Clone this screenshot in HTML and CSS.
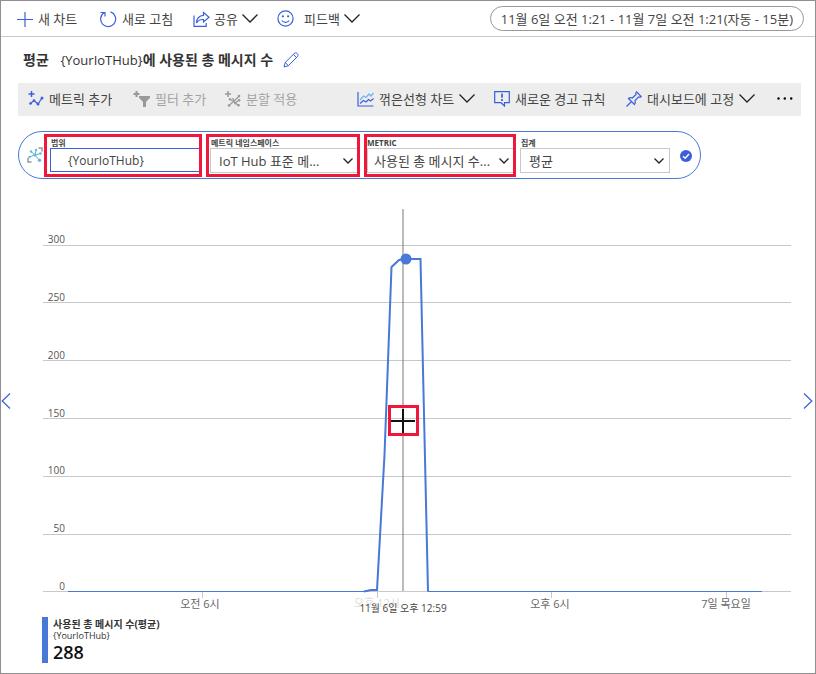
FILE: index.html
```html
<!DOCTYPE html>
<html lang="ko">
<head>
<meta charset="utf-8">
<meta name="viewport" content="width=device-width, initial-scale=1">
<title>메트릭</title>
<link rel="stylesheet" href="styles.css">
</head>
<body>
<main class="frame">
  <header class="topbar">
    <nav class="actions" aria-label="차트 작업">
      <button class="action" type="button">
        <svg class="icon" width="16" height="16" viewBox="0 0 16 16"><path d="M8 1v15M0 8.500h16"/></svg>
        새 차트
      </button>
      <button class="action" type="button">
        <svg class="icon" width="18" height="18" viewBox="0 0 18 18"><path d="M11.500 1.900A7.500 7.500 0 1 1 5.300 2.600M1.500 2.500h4.500v4"/></svg>
        새로 고침
      </button>
      <button class="action tight" type="button">
        <svg class="icon" width="17" height="16" viewBox="0 0 17 16"><path d="M1 4.500V15.300h12.200V12M10.500 1.500l5.500 4.700-5.500 4.800V8.500C7 8.300 5 9.500 3.500 12 3.800 7.500 6 4.500 10.500 4.300z"/></svg>
        공유
        <svg class="chevron" width="16" height="9" viewBox="0 0 16 9"><path d="M.5.500 8 8 15.500.500"/></svg>
      </button>
      <button class="action tight" type="button">
        <svg class="icon smile" width="17" height="17" viewBox="0 0 17 17"><circle cx="8.500" cy="8.500" r="7.600"/><path d="M4.800 10.500c1.700 2.500 5.700 2.500 7.400 0"/><circle class="dot" cx="5.900" cy="6.300" r="1.100"/><circle class="dot" cx="11.100" cy="6.300" r="1.100"/></svg>
        피드백
        <svg class="chevron" width="16" height="9" viewBox="0 0 16 9"><path d="M.5.500 8 8 15.500.500"/></svg>
      </button>
    </nav>
    <button class="range" type="button">11월 6일 오전 1:21 - 11월 7일 오전 1:21(자동 - 15분)</button>
  </header>

  <div class="heading">
    <h1 class="title">평균 <span class="resource">{YourIoTHub}</span>에 사용된 총 메시지 수</h1>
    <button class="edit" type="button" aria-label="제목 편집">
      <svg class="icon" width="16" height="16" viewBox="0 0 16 16"><path d="M1 15l1.200-4.500L11.500 1.200c2-1.200 4.300 1 3.200 3.100L5.400 13.700zM2.200 10.500l3.200 3.200M10.300 2.400l3.200 3.200"/></svg>
    </button>
  </div>

  <div class="toolbar" role="toolbar" aria-label="메트릭 도구">
    <button class="tool" type="button">
      <svg class="icon" width="16" height="16" viewBox="0 0 16 16"><path d="M3.500 0v6M.5 3h6" stroke-width="1.500"/><path d="M2.500 12.500 6 9.500l4 3.500 4-6"/><g class="dot"><circle cx="2.500" cy="12.500" r="1.300"/><circle cx="6" cy="9.500" r="1.300"/><circle cx="10" cy="13" r="1.500"/><circle cx="14" cy="7" r="1.500"/></g></svg>
      메트릭 추가
    </button>
    <button class="tool" type="button" disabled>
      <svg class="icon muted" width="17" height="16" viewBox="0 0 17 16"><path d="M3.500 0v6M.5 3h6" stroke-width="2"/><path class="dot" d="M6 5h11v1.800L13 11v5h-3v-5L6 6.800z"/></svg>
      필터 추가
    </button>
    <button class="tool" type="button" disabled>
      <svg class="icon muted" width="16" height="16" viewBox="0 0 16 16"><path d="M3 0v6M0 3h6" stroke-width="1.500"/><path d="M4 14.500 8.500 10.500 14 5.500M5.500 8.500l3 2 5 4M7.500 7l3 5 3.500-3"/><g class="dot"><circle cx="5" cy="8.300" r="1.200"/><circle cx="10.500" cy="12.300" r="1.200"/><circle cx="14" cy="5" r="1.300"/><circle cx="14.200" cy="9.300" r="1.200"/><circle cx="4" cy="14.500" r="1.300"/><circle cx="13.500" cy="14.300" r="1.300"/></g></svg>
      분할 적용
    </button>
    <button class="tool" type="button">
      <svg class="icon" width="17" height="16" viewBox="0 0 17 16"><path d="M1 1v14h15.500"/><path d="M3 12.500l3.500-3 2.500 1.500 2.500-2.500 2 1.500 3-2.500"/><path class="light" d="M3 9l3.500-4L9 6.500 12 3l2 2 2.500-3"/></svg>
      꺾은선형 차트
      <svg class="chevron" width="16" height="9" viewBox="0 0 16 9"><path d="M.5.500 8 8 15.500.500"/></svg>
    </button>
    <button class="tool" type="button">
      <svg class="icon" width="16" height="16" viewBox="0 0 16 16"><path d="M.7.700h14.600v11H10.500V15l-3.500-3.300H.7z"/><path d="M8 2.500v4.300M8 8v2" stroke-width="1.700"/></svg>
      새로운 경고 규칙
    </button>
    <button class="tool" type="button">
      <svg class="icon" width="16" height="16" viewBox="0 0 16 16"><path d="M.5 15.500l5-5M2.500 7.500l6 6c1-1.300 1-2.500.500-3.800L12.500 6c1.200.400 2 .200 2.700-.500L10.500.800C9.800 1.500 9.600 2.300 10 3.500L6.300 7C5 6.500 3.800 6.500 2.500 7.500z"/></svg>
      대시보드에 고정
      <svg class="chevron" width="16" height="9" viewBox="0 0 16 9"><path d="M.5.500 8 8 15.500.500"/></svg>
    </button>
    <button class="more" type="button" aria-label="더 보기">
      <svg width="16" height="3" viewBox="0 0 16 3"><circle cx="1.500" cy="1.500" r="1.200"/><circle cx="7.800" cy="1.500" r="1.200"/><circle cx="14.200" cy="1.500" r="1.200"/></svg>
    </button>
  </div>

  <form class="query">
    <svg class="scope-icon" width="16" height="16" viewBox="0 0 16 16"><path class="corner" d="M11.500 1H15v3.500M1 11v4h3.500"/><path class="spoke" d="M8 8 4 4.500M8 8l6-1.500M8 8l-5.500 2M8 8l4.500 5.500M8 8l1-5"/><g class="node"><circle cx="4" cy="4.500" r="1.200"/><circle cx="9" cy="3" r="1.200"/><circle cx="13.500" cy="6.500" r="1.300"/><circle cx="2.500" cy="10" r="1.200"/><circle cx="12.500" cy="13.300" r="1.700"/><circle cx="8" cy="8" r="1.600"/></g></svg>
    <div class="field marked scope">
      <label for="scope">범위</label>
      <input id="scope" type="text" value="{YourIoTHub}">
    </div>
    <div class="field marked">
      <label for="namespace">메트릭 네임스페이스</label>
      <div class="picker">
        <select id="namespace"><option>IoT Hub 표준 메...</option></select>
        <svg class="chevron" width="10" height="6" viewBox="0 0 10 6"><path d="M.5.500 5 5 9.500.500"/></svg>
      </div>
    </div>
    <div class="field marked metric">
      <label for="metric">METRIC</label>
      <div class="picker">
        <select id="metric"><option>사용된 총 메시지 수...</option></select>
        <svg class="chevron" width="10" height="6" viewBox="0 0 10 6"><path d="M.5.500 5 5 9.500.500"/></svg>
      </div>
    </div>
    <div class="field">
      <label for="aggregation">집계</label>
      <div class="picker">
        <select id="aggregation"><option>평균</option></select>
        <svg class="chevron" width="10" height="6" viewBox="0 0 10 6"><path d="M.5.500 5 5 9.500.500"/></svg>
      </div>
    </div>
    <svg class="check" width="12" height="12" viewBox="0 0 12 12"><circle cx="6" cy="6" r="6"/><path d="M3 6.200 5.200 8.300 9 4"/></svg>
  </form>

  <section class="chart" aria-label="사용된 총 메시지 수">
    <button class="pager" type="button" aria-label="이전">
      <svg class="icon" width="10" height="16" viewBox="0 0 10 16"><path d="M9 .500 1.200 8 9 15.500"/></svg>
    </button>
    <svg class="plot" viewBox="17 188 782 426">
      <path class="grid" d="M43 245.500H791M43 302.500H791M43 360.500H791M43 418.500H791M43 476.500H791M43 534.500H791M43 591.500H791"/>
      <path class="grid" d="M202.500 592v6M377.500 592v6M551.500 592v6M726.500 592v6"/>
      <g class="values">
        <text x="65" y="243">300</text>
        <text x="65" y="301">250</text>
        <text x="65" y="359">200</text>
        <text x="65" y="417">150</text>
        <text x="65" y="474">100</text>
        <text x="65" y="532">50</text>
        <text x="65" y="590">0</text>
      </g>
      <g class="times">
        <text x="200" y="608">오전 6시</text>
        <text class="faded" x="377" y="607">오후 12시</text>
        <text x="550" y="608">오후 6시</text>
        <text x="726" y="608">7일 목요일</text>
        <text class="current" x="403" y="612">11월 6일 오후 12:59</text>
      </g>
      <path class="baseline" d="M68 591.500H365M428 591.500H762"/>
      <path class="series" d="M364 591.500 371 590H377L384.500 455 391.500 267 399 260 406 259H420.500L428 591.500"/>
      <path class="crosshair" d="M403 209V591"/>
      <circle class="point" cx="406" cy="259" r="5.500"/>
      <path class="cursor" d="M391 421H415M403 409V433"/>
      <rect class="marker" x="389.500" y="406.500" width="28" height="28"/>
    </svg>
    <button class="pager" type="button" aria-label="다음">
      <svg class="icon" width="10" height="16" viewBox="0 0 10 16"><path d="M1 .500 8.800 8 1 15.500"/></svg>
    </button>
  </section>

  <section class="legend">
    <strong>사용된 총 메시지 수(평균)</strong>
    <span>{YourIoTHub}</span>
    <b class="total">288</b>
  </section>
</main>
</body>
</html>
```

FILE: styles.css
```css
:root {
  --blue: #3b5fdb;
  --line: #4878d8;
  --red: #f0173c;
  --rule: #c8c8c8;
  --ink: #444;
}

* {
  box-sizing: border-box;
}

body {
  margin: 0;
  background: #fff;
  color: var(--ink);
  font: 13px/18px "Open Sans", "Noto Sans CJK KR", sans-serif;
}

button,
input,
select {
  margin: 0;
  padding: 0;
  border: 0;
  background: none;
  color: inherit;
  font: inherit;
}

.frame {
  min-height: 100vh;
  border: 1px solid #8f8f8f;
}

.icon {
  flex: none;
  fill: none;
  stroke: var(--blue);
  stroke-width: 1.2;
}

.icon .dot {
  fill: var(--blue);
  stroke: none;
}

.icon .light {
  stroke: #6fb5e8;
}

.edit .icon {
  stroke-width: 1;
}

.icon.muted {
  stroke: #999;
}

.icon.muted .dot {
  fill: #999;
}

.chevron {
  flex: none;
  fill: none;
  stroke: #222;
  stroke-width: 1.3;
}

.topbar {
  display: flex;
  align-items: center;
  justify-content: space-between;
  height: 36px;
  padding: 0 11px 0 16px;
  border-bottom: 1px solid var(--rule);
}

.actions {
  display: grid;
  grid-template-columns: 82px 94px 84px auto;
}

.action,
.tool {
  display: flex;
  align-items: center;
  gap: 5px;
  white-space: nowrap;
}

.tight {
  gap: 4px;
}

.smile {
  margin-right: 6px;
}

.range {
  height: 25px;
  padding: 0 10px;
  border: 1px solid #999;
  border-radius: 13px;
  white-space: nowrap;
}

.heading {
  display: flex;
  align-items: center;
  gap: 10px;
  height: 46px;
  padding-left: 22px;
}

.title {
  margin: 0;
  color: #333;
  font-size: 14px;
  font-weight: 600;
  line-height: 20px;
}

.resource {
  margin-left: 8px;
  font-size: 13px;
  font-weight: 400;
}

.edit {
  display: flex;
}

.toolbar {
  display: grid;
  grid-template-columns: 105px 92px 132px 137px 132px 151px auto;
  align-items: center;
  height: 33px;
  margin: 0 14px 0 17px;
  padding: 0 0 2px 10px;
  background: #ededed;
}

.tool:disabled {
  color: #a3a3a3;
}

.more {
  display: flex;
}

.query {
  display: grid;
  grid-template-columns: 16px 158px 154px 152px 150px 12px;
  column-gap: 4px;
  width: max-content;
  height: 48px;
  margin: 15px 0 0 17px;
  padding: 2px 8px 0 5px;
  border: 1px solid var(--line);
  border-radius: 24px;
  box-sizing: border-box;
}

.query {
  padding-right: 14px;
}

.scope-icon {
  margin: 13px 0 0 3px;
  fill: none;
}

.corner {
  stroke: #999;
  stroke-width: 1.5;
}

.spoke {
  stroke: #6aaecb;
}

.node {
  fill: #5fbce0;
}

.field {
  height: 43px;
  padding-top: 3px;
}

.marked {
  padding: 0 0 0 1px;
  border: 3px solid var(--red);
}

.field label {
  display: block;
  padding-left: 1px;
  font-size: 8px;
  font-weight: 700;
  line-height: 11px;
}

.marked.scope {
  padding-left: 3px;
}

.marked.metric {
  padding-left: 0;
}

.metric label {
  padding-left: 0;
}

.scope input {
  width: 100%;
  height: 24px;
  padding-left: 17px;
  border: 1px solid var(--blue);
  border-right: 0;
  font-size: 12px;
}

.picker {
  display: grid;
  align-items: center;
}

.picker select,
.picker .chevron {
  grid-area: 1 / 1;
}

.picker select {
  width: 100%;
  height: 25px;
  padding-left: 8px;
  border: 1px solid var(--rule);
  border-radius: 0;
  appearance: none;
}

.marked select {
  border-right: 0;
}

.metric .picker select {
  padding-left: 6px;
}

.picker .chevron {
  justify-self: end;
  margin-right: 6px;
  pointer-events: none;
}

.marked .picker .chevron {
  margin-right: 4px;
}

.check {
  align-self: center;
  margin-left: 6px;
  overflow: visible;
  fill: var(--blue);
}

.check path {
  fill: none;
  stroke: #fff;
  stroke-width: 1.4;
}

.chart {
  display: flex;
  align-items: center;
  margin-top: 9px;
}

.pager {
  display: flex;
  flex: 0 0 16px;
}

.pager:last-child {
  padding-left: 4px;
}

.plot {
  flex: 1;
  min-width: 0;
}

.grid {
  fill: none;
  stroke: var(--rule);
}

.values {
  fill: #555;
  font-size: 10px;
  text-anchor: end;
}

.times {
  fill: #666;
  font-size: 11px;
  text-anchor: middle;
}

.times .faded {
  fill: #ddd;
}

.times .current {
  fill: #444;
  font-size: 10px;
}

.baseline {
  stroke: var(--line);
}

.series {
  fill: none;
  stroke: var(--line);
  stroke-width: 2;
}

.crosshair {
  stroke: #777;
  stroke-opacity: 0.5;
  stroke-width: 2;
}

.point {
  fill: var(--line);
}

.cursor {
  stroke: #111;
  stroke-width: 2;
}

.marker {
  fill: none;
  stroke: var(--red);
  stroke-width: 3;
}

.legend {
  display: flex;
  flex-direction: column;
  margin: 3px 0 0 41px;
  padding-top: 1px;
  padding-left: 5px;
  border-left: 6px solid var(--line);
  color: #333;
  font-size: 9px;
  line-height: 11px;
}

.legend strong {
  font-size: 10px;
  line-height: 12px;
}

.legend .total {
  color: #111;
  font-size: 18px;
  font-weight: 600;
  line-height: 22px;
}
```
